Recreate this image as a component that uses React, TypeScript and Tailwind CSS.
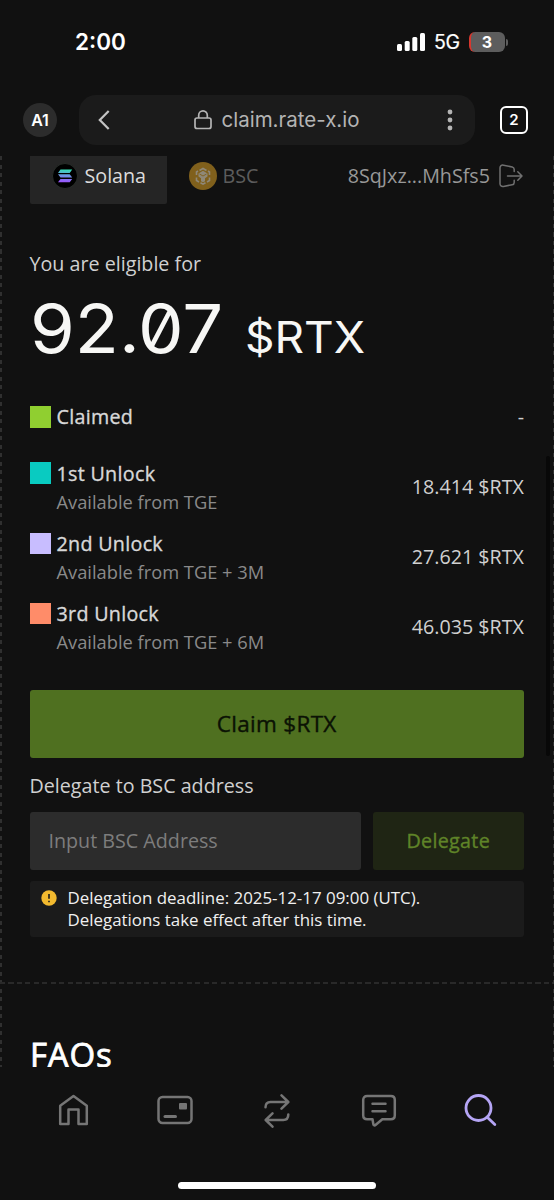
import React from "react";

interface Unlock {
  title: string;
  note: string;
  amount: string;
  color: string;
}

const unlocks: Unlock[] = [
  { title: "1st Unlock", note: "Available from TGE", amount: "18.414 $RTX", color: "bg-[#09cbc1]" },
  { title: "2nd Unlock", note: "Available from TGE + 3M", amount: "27.621 $RTX", color: "bg-[#c8bdff]" },
  { title: "3rd Unlock", note: "Available from TGE + 6M", amount: "46.035 $RTX", color: "bg-[#ff8c69]" },
];

const StatusBar: React.FC = () => (
  <div className="flex h-[84px] items-center justify-between pl-[75px] pr-[46px] font-['Inter',sans-serif] text-white">
    <span className="text-[22.5px] font-semibold leading-7">2:00</span>
    <div className="flex items-center">
      <svg width="28" height="18" viewBox="0 0 28 18" fill="#fff">
        <rect x="0" y="11" width="5" height="7" rx="1.5" />
        <rect x="7.7" y="8" width="5" height="10" rx="1.5" />
        <rect x="15.3" y="4" width="5" height="14" rx="1.5" />
        <rect x="23" y="0" width="5" height="18" rx="1.5" />
      </svg>
      <span className="ml-[9px] w-[26px] text-[19.5px] leading-6 tracking-[-0.3px] [-webkit-text-stroke:0.2px_currentColor]">5G</span>
      <div className="ml-[9px] flex h-5 w-9 items-center justify-center overflow-hidden rounded-[6px] border-l-2 border-[#d7372e] bg-[#5d5d5d] pr-0.5 text-base font-bold">
        3
      </div>
      <div className="ml-px h-[7px] w-[2px] rounded-r-full bg-[#5d5d5d]" />
    </div>
  </div>
);

const AddressBar: React.FC = () => (
  <div className="flex h-[72px] items-center pl-[23px] pr-[26px] font-['Inter',sans-serif]">
    <div className="flex size-[34px] items-center justify-center rounded-full bg-[#2c2c2c] text-base font-semibold text-white">A1</div>
    <div className="ml-[22px] flex h-[50px] w-[396px] items-center rounded-[17px] bg-[#1b1b1b] pl-[19px] pr-[22px] text-[#b4b4b4]">
      <svg width="12" height="20" viewBox="0 0 12 20" fill="none" stroke="#c4c4c4" strokeWidth="2.2">
        <path d="M10.7 1 1.8 10l8.9 9" />
      </svg>
      <div className="flex flex-1 items-center justify-center pr-[3px]">
        <svg width="18" height="20" viewBox="0 0 18 20" fill="none" stroke="#b4b4b4" strokeWidth="1.7">
          <rect x="1" y="8" width="16" height="10.5" rx="2" />
          <path d="M4.7 8V5.2a4.3 4.3 0 0 1 8.6 0V8" />
        </svg>
        <span className="ml-[9px] text-[20.5px] leading-7">claim.rate-x.io</span>
      </div>
      <svg width="6" height="22" viewBox="0 0 6 22" fill="#b4b4b4">
        <circle cx="3" cy="3" r="2.4" />
        <circle cx="3" cy="11" r="2.4" />
        <circle cx="3" cy="19" r="2.4" />
      </svg>
    </div>
    <div className="ml-auto flex size-[28px] items-center justify-center rounded-[6px] border-[2.5px] border-white text-[15px] font-semibold text-white">2</div>
  </div>
);

const SolanaLogo: React.FC = () => (
  <svg width="26" height="26" viewBox="0 0 26 26">
    <defs>
      <linearGradient id="sol" x1="13" y1="20" x2="14" y2="6" gradientUnits="userSpaceOnUse">
        <stop offset="0" stopColor="#a04dff" />
        <stop offset="0.5" stopColor="#6f8fe6" />
        <stop offset="1" stopColor="#2fe8b0" />
      </linearGradient>
    </defs>
    <circle cx="13" cy="13" r="12.5" fill="#000" stroke="#2d332e" strokeWidth="0.8" />
    <path fill="url(#sol)" d="M8.5 6.6h11.7l-2.5 3.3H6zM6 11.3h11.7l2.5 3.3H8.5zM8.5 16h11.7l-2.5 3.3H6z" />
  </svg>
);

const BscLogo: React.FC = () => (
  <svg width="28" height="28" viewBox="0 0 28 28">
    <circle cx="14" cy="14" r="14" fill="#80601c" />
    <g fill="none" stroke="#8f8878" strokeWidth="1.6">
      <path d="m10.5 8.5 3.5-2 3.5 2M7.5 13v-3l1.5-1M20.5 13v-3L19 9M7.5 15.5v3L10 20M20.5 15.5v3L18 20M11.5 20.8l2.5 1.4 2.5-1.4" />
    </g>
    <path fill="#8f8878" d="m14 8.8 4.5 2.6v3.2L16 16.2v3L14 20.3l-2-1.1v-3l-2.5-1.6v-3.2z" />
    <path d="m10.5 12 3.5 2 3.5-2" fill="none" stroke="#80601c" strokeWidth="0.9" />
  </svg>
);

const Tabs: React.FC = () => (
  <div className="flex h-12 items-start text-[19.7px]">
    <div className="flex h-12 w-[137.5px] items-start rounded-b-[2px] bg-[#252525] pl-[22px] pt-[7px] text-[#dcdcdc]">
      <SolanaLogo />
      <span className="ml-[7px] leading-[26px]">Solana</span>
    </div>
    <div className="ml-[21.5px] flex items-start pt-[6px] text-[#5c5c5c]">
      <BscLogo />
      <span className="ml-[6px] leading-7">BSC</span>
    </div>
    <div className="ml-auto flex items-center pt-[6px] text-[#989898]">
      <span className="leading-7">8SqJxz...MhSfs5</span>
      <svg className="ml-[9px] mr-px" width="24" height="24" viewBox="0 0 24 24" fill="none" stroke="#707070" strokeWidth="1.5" strokeLinecap="round" strokeLinejoin="round">
        <path d="M15.2 7.5v-2c0-1.4-.8-2.2-2-2.5L4.5 1.2C2.5.8 1 1.8 1 3.8v16c0 1.9 1.5 3 3.5 2.6l8.7-1.7c1.3-.2 2-1 2-2.3v-2.2" />
        <path d="M8.5 12H23M18.8 7.8 23 12l-4.2 4.2" />
      </svg>
    </div>
  </div>
);

const UnlockRow: React.FC<{ item: Unlock }> = ({ item }) => (
  <div className="flex h-[70.4px] items-start">
    <div className={`mt-[2.5px] size-[21.5px] ${item.color}`} />
    <div className="ml-[5.5px]">
      <div className="text-[19.7px] leading-7 tracking-[0.3px] text-[#d8d8d8] [-webkit-text-stroke:0.35px_currentColor]">{item.title}</div>
      <div className="text-[18.3px] leading-7 text-[#8a8a8a]">{item.note}</div>
    </div>
    <div className="ml-auto text-[19.7px] leading-[54px] text-[#d0d0d0]">{item.amount}</div>
  </div>
);

const Claim: React.FC = () => (
  <div className="pl-[29.5px] pr-[30px] text-[#d0d0d0]">
    <Tabs />
    <div className="mt-[46px] text-[19.7px] leading-7">You are eligible for</div>
    <div className="mt-[9px] flex h-[84px] items-baseline font-['Inter',sans-serif] text-[#f7f7f5]">
      <span className="w-[192px] origin-left scale-x-[1.08] text-[67px] leading-[84px] [font-feature-settings:'zero']">92.07</span>
      <span className="ml-[23px] origin-left scale-x-[1.045] text-[44px] leading-[60px]">$RTX</span>
    </div>

    <div className="mt-[32px] flex h-7 items-center text-[19.7px]">
      <div className="size-[21.5px] bg-[#90cf30]" />
      <span className="ml-[5.5px] tracking-[0.3px] text-[#d8d8d8] [-webkit-text-stroke:0.35px_currentColor]">Claimed</span>
      <span className="ml-auto">-</span>
    </div>
    <div className="mt-[28.7px]">
      {unlocks.map((item) => (
        <UnlockRow key={item.title} item={item} />
      ))}
    </div>

    <button className="mt-[18.8px] block h-[68px] w-full rounded-[3px] bg-[#4f7020] text-[22.5px] tracking-[0.3px] text-[#0b1204] [-webkit-text-stroke:0.4px_currentColor]">
      Claim $RTX
    </button>
    <div className="mt-[14px] text-[19.7px] leading-7">Delegate to BSC address</div>
    <div className="mt-[12.8px] flex h-[57.5px] gap-[11.5px]">
      <input
        className="w-[331.5px] rounded-[3px] bg-[#2c2c2c] px-[19px] text-[19.7px] outline-none placeholder:text-[#7d7d7d]"
        placeholder="Input BSC Address"
      />
      <button className="flex-1 rounded-[3px] bg-[#1f2514] text-[19.7px] tracking-[0.3px] text-[#5f8428] [-webkit-text-stroke:0.35px_currentColor]">Delegate</button>
    </div>
    <div className="mt-[11px] flex h-[56.5px] items-start rounded-[3px] bg-[#1b1b1b] pl-[11px] pt-[6px]">
      <svg className="mt-[3px]" width="16" height="16" viewBox="0 0 16 16">
        <circle cx="8" cy="8" r="7.7" fill="#f3ba2f" />
        <path d="M8 4v4.8M8 10.7v1.5" stroke="#1b1b1b" strokeWidth="1.6" />
      </svg>
      <p className="ml-[11px] text-[16.9px] leading-[22.5px] text-[#f0f0f0]">
        Delegation deadline: 2025-12-17 09:00 (UTC).
        <br />
        Delegations take effect after this time.
      </p>
    </div>
  </div>
);

const BottomNav: React.FC = () => (
  <div className="flex h-[133px] flex-col items-center bg-[#111]">
    <div className="flex h-[86px] w-full items-center justify-between px-[55px]">
      <svg width="36" height="36" viewBox="0 0 36 36" fill="none" stroke="#757575" strokeWidth="2.5" strokeLinejoin="round">
        <path d="M5.2 32V13.8L18.5 4l13.3 9.8V32h-8.3V17.5h-10V32z" />
      </svg>
      <svg width="36" height="36" viewBox="0 0 36 36" fill="none" stroke="#757575" strokeWidth="2.5">
        <rect x="1.5" y="5" width="33" height="26" rx="4" />
        <path d="M8 24.5h10.5" strokeLinecap="round" strokeWidth="3" />
        <rect x="22" y="11" width="8" height="6.5" rx="1" fill="#757575" stroke="none" />
      </svg>
      <svg width="36" height="36" viewBox="0 0 36 36" fill="none" stroke="#757575" strokeWidth="2.5" strokeLinecap="round" strokeLinejoin="round">
        <path d="M6.5 15.3c0-3.6 1.8-5.3 5-5.3H29M22.5 3.3l6.8 6.7-6.8 6.7M29.3 22.5c0 3.6-1.8 5.5-5 5.5H7M13.5 21.3 6.7 28l6.8 6.7" />
      </svg>
      <svg width="36" height="36" viewBox="0 0 36 36" fill="none" stroke="#757575" strokeWidth="2.5" strokeLinecap="round" strokeLinejoin="round">
        <path d="M6.2 4h23.6c2.6 0 4 1.4 4 4v15.2c0 2.6-1.4 4-4 4h-8.5l-6.5 5.6c-1.2 1-2.3.7-2.5-.8l-.8-4.8H6.2c-2.6 0-4-1.4-4-4V8c0-2.600 1.400-4 4-4zM11.5 11.8h13M11.5 19.3h13" />
      </svg>
      <svg width="36" height="36" viewBox="0 0 36 36" fill="none" stroke="#b5a5f5" strokeWidth="2.8" strokeLinecap="round">
        <circle cx="15.5" cy="16" r="12.5" />
        <path d="m24.5 25.5 7.3 7" />
      </svg>
    </div>
    <div className="mt-[29px] h-[7px] w-[198px] rounded-full bg-white" />
  </div>
);

const App: React.FC = () => {
  return (
    <div className="relative flex h-[1200px] w-[554px] flex-col overflow-hidden bg-[#111] font-['Open_Sans','Noto_Sans',sans-serif]">
      <StatusBar />
      <AddressBar />
      <main className="flex h-[911px] justify-between">
        <div className="w-[1.5px] shrink-0 bg-[repeating-linear-gradient(180deg,#303030_0_4px,transparent_4px_8.5px)]" />
        <div className="-mx-[1.5px] w-[554px] shrink-0">
          <Claim />
          <div className="mt-[45px] h-[1.5px] bg-[repeating-linear-gradient(90deg,#292929_0_5px,transparent_5px_8.5px)]" />
          <h2 className="mt-[48px] px-[30px] text-[33px] leading-[46px] tracking-[0.8px] text-white [-webkit-text-stroke:0.8px_currentColor]">FAOs</h2>
        </div>
        <div className="w-[1.5px] shrink-0 bg-[repeating-linear-gradient(180deg,#303030_0_4px,transparent_4px_8.5px)]" />
      </main>
      <BottomNav />
      <div className="absolute right-1 top-[456px] h-[300px] w-1 rounded-full bg-[#080808]" />
    </div>
  );
};

export default App;
